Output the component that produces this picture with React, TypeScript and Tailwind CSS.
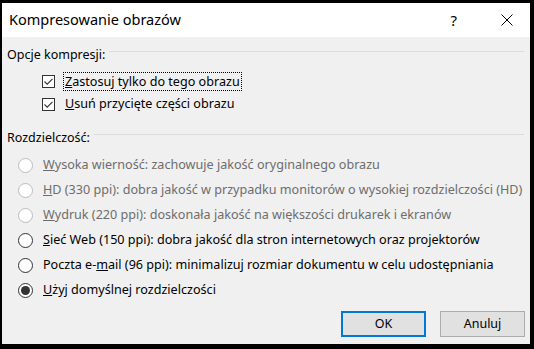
import type { ReactNode } from 'react'

const font = { fontFamily: '"Noto Sans", "Open Sans", sans-serif' }

function Check() {
  return (
    <span className="flex h-[13px] w-[13px] shrink-0 items-center justify-center border border-[#333] bg-white">
      <svg width="11" height="11" viewBox="0 0 11 11">
        <path d="M1.5 5.5 L4.2 8.2 L9.5 2.8" fill="none" stroke="#333" strokeWidth="1.1" />
      </svg>
    </span>
  )
}

function Radio({ disabled, checked }: { disabled?: boolean; checked?: boolean }) {
  return (
    <span
      className={`flex h-[15px] w-[15px] shrink-0 items-center justify-center rounded-full border bg-white ${
        disabled ? 'border-[#bcbcbc]' : 'border-[#333]'
      }`}
    >
      {checked && <span className="h-[9px] w-[9px] rounded-full bg-[#333]" />}
    </span>
  )
}

function Section({ label }: { label: string }) {
  return (
    <div className="flex items-center gap-1 pr-[6px]">
      <span className="text-[12.5px] text-black">{label}</span>
      <span className="mt-[-7px] h-px flex-1 bg-[#dcdcdc]" />
    </div>
  )
}

function RadioRow({ children, disabled, checked }: { children: ReactNode; disabled?: boolean; checked?: boolean }) {
  return (
    <div className="flex h-[25px] items-center gap-[10px] pl-[11px]">
      <Radio disabled={disabled} checked={checked} />
      <span className={`whitespace-nowrap text-[12.6px] ${disabled ? 'text-[#6d6d6d]' : 'text-black'}`}>
        {children}
      </span>
    </div>
  )
}

export default function App() {
  return (
    <div className="h-[349px] w-[534px] bg-black pb-[5px] pl-[2px] pr-[4px] pt-[3px]" style={font}>
      <div className="flex h-full flex-col bg-[#f0f0f0]">
        <div className="flex h-[34px] shrink-0 items-center bg-white pl-[7px]">
          <span className="text-[14.5px] text-black">Kompresowanie obrazów</span>
          <span className="ml-auto mr-[44px] text-[15px] text-black">?</span>
          <svg width="12" height="12" viewBox="0 0 12 12" className="mr-[17px]">
            <path d="M0.5 0.5 L11.5 11.5 M11.5 0.5 L0.5 11.5" stroke="#000" strokeWidth="1" />
          </svg>
        </div>

        <div className="flex flex-1 flex-col pl-[5px] pt-[9px]">
          <Section label="Opcje kompresji:" />
          <div className="mt-[7px] flex flex-col gap-[4px] pl-[35px]">
            <div className="flex h-[19px] items-center gap-[8px]">
              <Check />
              <span className="whitespace-nowrap border border-dotted border-black px-[1px] text-[12.6px] leading-[17px] text-black">
                <u>Z</u>astosuj tylko do tego obrazu
              </span>
            </div>
            <div className="flex h-[19px] items-center gap-[8px]">
              <Check />
              <span className="whitespace-nowrap px-[2px] text-[12.6px] text-black">
                <u>U</u>suń przycięte części obrazu
              </span>
            </div>
          </div>

          <div className="mt-[15px]">
            <Section label="Rozdzielczość:" />
          </div>
          <div className="mt-[5px] flex flex-col">
            <RadioRow disabled>
              <u>W</u>ysoka wierność: zachowuje jakość oryginalnego obrazu
            </RadioRow>
            <RadioRow disabled>
              <u>H</u>D (330 ppi): dobra jakość w przypadku monitorów o wysokiej rozdzielczości (HD)
            </RadioRow>
            <RadioRow disabled>
              <u>W</u>ydruk (220 ppi): doskonała jakość na większości drukarek i ekranów
            </RadioRow>
            <RadioRow>
              <u>S</u>ieć Web (150 ppi): dobra jakość dla stron internetowych oraz projektorów
            </RadioRow>
            <RadioRow>
              Poczta e-<u>m</u>ail (96 ppi): minimalizuj rozmiar dokumentu w celu udostępniania
            </RadioRow>
            <RadioRow checked>
              <u>U</u>żyj domyślnej rozdzielczości
            </RadioRow>
          </div>

          <div className="mt-auto mb-[7px] flex justify-end gap-[14px] pr-[5px]">
            <button className="h-[26px] w-[85px] border-2 border-[#0078d7] bg-[#e1e1e1] text-[12.5px] text-black">
              OK
            </button>
            <button className="h-[26px] w-[85px] border border-[#adadad] bg-[#e1e1e1] text-[12.5px] text-black">
              Anuluj
            </button>
          </div>
        </div>
      </div>
    </div>
  )
}
